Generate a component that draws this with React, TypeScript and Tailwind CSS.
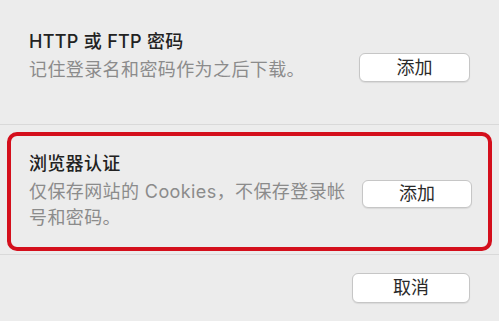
import React from "react";

const font = { fontFamily: '"Inter", "Noto Sans CJK SC", sans-serif' };

function Btn({ children, w = "w-[111px]", h = "h-[29px]" }: { children: React.ReactNode; w?: string; h?: string }) {
  return (
    <button
      className={`${w} ${h} shrink-0 rounded-[6px] border border-[#c6c6c6] bg-white text-[18px] leading-none text-[#2a2a2a] shadow-[0_1px_1px_rgba(0,0,0,0.08)] flex items-center justify-center`}
    >
      {children}
    </button>
  );
}

export default function App() {
  return (
    <div className="w-[499px] h-[321px] bg-[#ececec] flex flex-col overflow-hidden" style={font}>
      {/* Section 1 */}
      <div className="flex flex-row pl-[29px] pr-[29px] pt-[30px] h-[124px]">
        <div className="flex-1 flex flex-col">
          <div className="text-[18px] leading-[24px] font-medium text-[#222] tracking-[0.3px]">HTTP 或 FTP 密码</div>
          <div className="mt-[3px] text-[18px] leading-[26px] text-[#8b8b8b] tracking-[0.4px]">记住登录名和密码作为之后下载。</div>
        </div>
        <div className="mt-[23px]">
          <Btn>添加</Btn>
        </div>
      </div>
      <div className="h-px bg-[#d9d9d9]" />
      {/* Red highlighted section */}
      <div className="mx-[7px] mt-[7px] h-[119px] rounded-[10px] border-[4px] border-[#d40f1c] flex flex-row pl-[18px] pr-[16px] pt-[16px]">
        <div className="flex-1 flex flex-col pr-[8px]">
          <div className="text-[18px] leading-[24px] font-medium text-[#222] tracking-[0.3px]">浏览器认证</div>
          <div className="mt-[3px] text-[18px] leading-[26px] text-[#8b8b8b] tracking-[0.4px]">
            仅保存网站的 Cookies，不保存登录帐号和密码。
          </div>
        </div>
        <div className="mt-[28px]">
          <Btn w="w-[110px]" h="h-[28px]">添加</Btn>
        </div>
      </div>
      <div className="mt-[3px] h-px bg-[#d9d9d9]" />
      <div className="flex flex-row justify-end pr-[29px] mt-[18px]">
        <Btn w="w-[118px]" h="h-[30px]">取消</Btn>
      </div>
    </div>
  );
}
